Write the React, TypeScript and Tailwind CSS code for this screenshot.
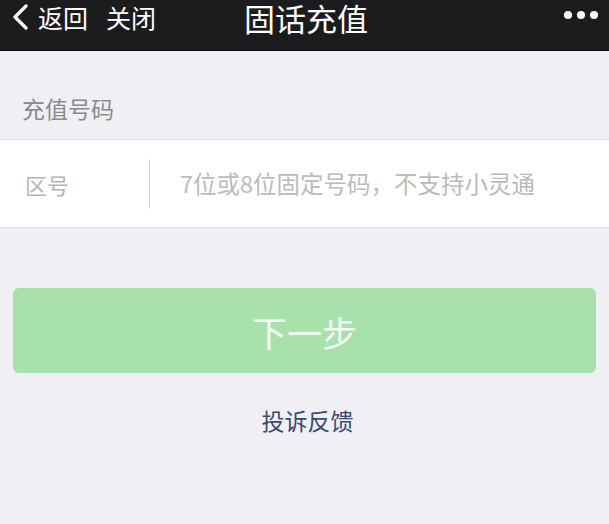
const font = { fontFamily: '"Noto Sans CJK SC", "Noto Sans", sans-serif' };

export default function App() {
  return (
    <main className="h-[524px] w-[609px] overflow-hidden bg-[#efeff4]" style={font}>
      {/* nav bar */}
      <header className="flex h-[51px] items-start border-b border-[#0a0a0a] bg-[#1c1c1e] pt-[2px] text-white">
        <div className="flex h-[30px] flex-1 items-center">
          <svg className="ml-[11px] mr-[9px]" width="18" height="26" viewBox="0 0 18 26">
            <path d="M15 2 L4 13 L15 24" fill="none" stroke="#fff" strokeWidth="3.2" strokeLinecap="round" strokeLinejoin="round" />
          </svg>
          <span className="text-[25px] leading-[30px]">返回</span>
          <span className="ml-[18px] text-[25px] leading-[30px]">关闭</span>
        </div>
        <h1 className="-mt-[1px] ml-[14px] text-[31px] leading-[33px]">固话充值</h1>
        <div className="flex h-[26px] flex-1 items-center justify-end gap-[5px] pr-[11px]">
          <span className="h-[8px] w-[8px] rounded-full bg-white"></span>
          <span className="h-[8px] w-[8px] rounded-full bg-white"></span>
          <span className="h-[8px] w-[8px] rounded-full bg-white"></span>
        </div>
      </header>

      <div className="flex h-[88px] items-end px-[22px] pb-[19px]">
        <p className="text-[23px] leading-none text-[#8a8a8e]">充值号码</p>
      </div>

      <div className="flex h-[89px] items-center border-y border-[#dcdce0] bg-white">
        <span className="w-[149px] pl-[25px] text-[22px] leading-none text-[#b4b4b4]">区号</span>
        <span className="h-[50px] w-px bg-[#d6d6d6]"></span>
        <span className="pl-[30px] text-[23.5px] leading-none text-[#bbbbbb]">7位或8位固定号码，不支持小灵通</span>
      </div>

      <div className="px-[13px] pt-[60px]">
        <button className="flex h-[85px] w-full items-center justify-center rounded-[6px] bg-[#a8e1ab] pt-[3px] text-[35px] text-white/90">
          下一步
        </button>
        <p className="mt-[36px] pl-[6px] text-center text-[23px] leading-none text-[#3b4a72]">投诉反馈</p>
      </div>
    </main>
  );
}
